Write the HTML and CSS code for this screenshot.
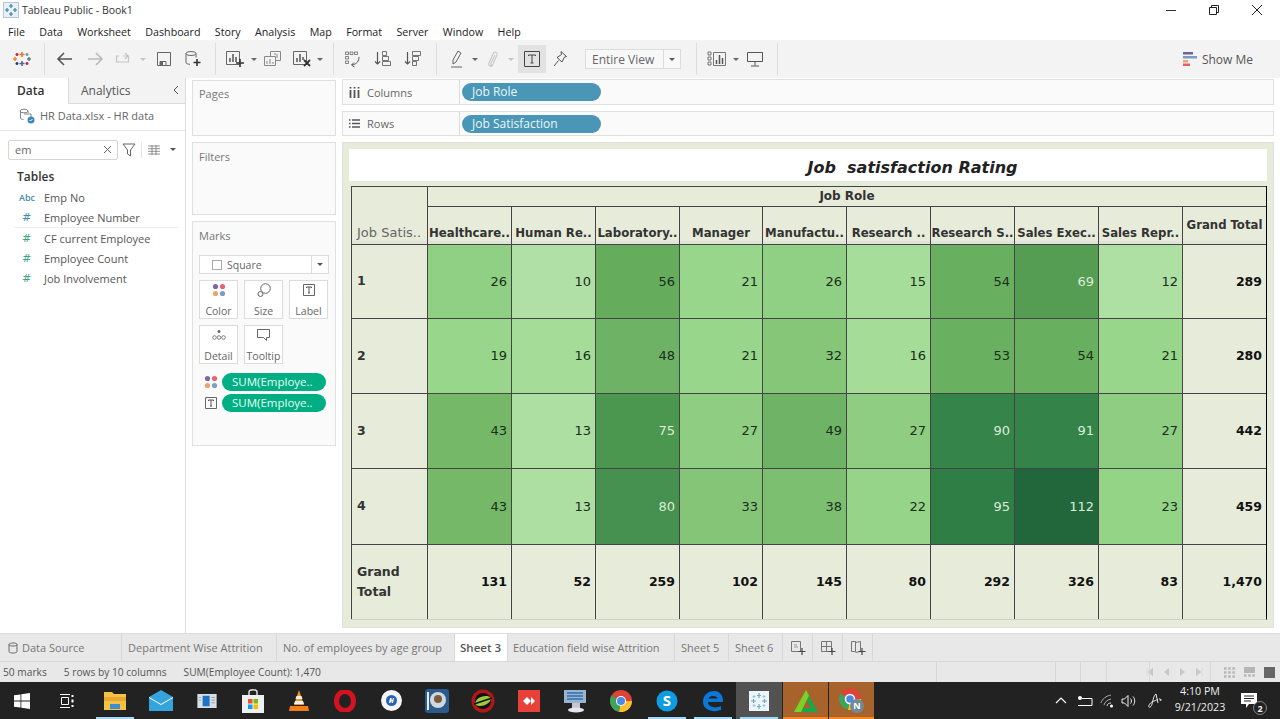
FILE: index.html
```html
<!DOCTYPE html>
<html lang="en">
<head>
  <meta charset="UTF-8">
  <title>Tableau Public - Book1</title>
  <link rel="stylesheet" href="styles.css">
</head>
<body>
  <div class="titlebar">
    <svg class="app-icon" width="16" height="16" viewBox="0 0 16 16"><rect x="0.5" y="0.5" width="15" height="15" fill="#e6f0f6" stroke="#b5c7d6"/><path d="M8 2v4M6 4h4M8 10v4M6 12h4M2 8h4M4 6v4M10 8h4M12 6v4" stroke="#3f7fa8" stroke-width="1.2"/></svg>
    <span class="app-title">Tableau Public - Book1</span>
    <div class="win-controls">
      <svg width="12" height="12" viewBox="0 0 12 12"><path d="M1 6.5h10" stroke="#333"/></svg>
      <svg width="12" height="12" viewBox="0 0 12 12"><path d="M1.5 3.5h7v7h-7zM3.5 3.5v-2h7v7h-2" fill="none" stroke="#222"/></svg>
      <svg width="12" height="12" viewBox="0 0 12 12"><path d="M1 1l10 10M11 1L1 11" stroke="#222"/></svg>
    </div>
  </div>

  <nav class="menubar">
    <span>File</span><span>Data</span><span>Worksheet</span><span>Dashboard</span><span>Story</span><span>Analysis</span><span>Map</span><span>Format</span><span>Server</span><span>Window</span><span>Help</span>
  </nav>

  <div class="toolbar">
    <svg class="logo" width="28" height="20" viewBox="0 0 28 20"><g stroke-width="1.6"><path d="M14 3v5M11.5 5.500h5" stroke="#e8762d"/><path d="M14 12v5M11.500 14.500h5" stroke="#5b6591"/><path d="M7 8v4M5 10h4" stroke="#eb912b"/><path d="M21 8v4M19 10h4" stroke="#59879b"/><path d="M9 4v3M7.500 5.500h3" stroke="#c72037"/><path d="M19 4v3M17.500 5.500h3" stroke="#7099a6"/><path d="M9 13v3M7.500 14.500h3" stroke="#1f447e"/><path d="M19 13v3M17.500 14.500h3" stroke="#b0304a"/></g></svg>
    <i class="sep sep-first"></i>
    <div class="tool w30"><svg width="18" height="16" viewBox="0 0 18 16"><path d="M16 8H2M8 2L2 8l6 6" fill="none" stroke="#555" stroke-width="1.6"/></svg></div>
    <div class="tool w30"><svg width="18" height="16" viewBox="0 0 18 16"><path d="M2 8h14M10 2l6 6-6 6" fill="none" stroke="#bbb" stroke-width="1.6"/></svg></div>
    <div class="tool w26"><svg width="18" height="14" viewBox="0 0 18 14"><path d="M5 4H2.500v6h12V4H9M11 1l3 3-3 3" fill="none" stroke="#c4c4c4" stroke-width="1.200"/></svg></div>
    <div class="tool w14"><i class="caret faint"></i></div>
    <div class="tool w28"><svg width="16" height="16" viewBox="0 0 16 16"><path d="M1.500 1.500h13v13h-13zM4 14.500v-4h6v4" fill="none" stroke="#666"/><rect x="4" y="11" width="3" height="3" fill="#666"/></svg></div>
    <div class="tool w30"><svg width="18" height="18" viewBox="0 0 18 18"><path d="M2 3.500v9c0 1 2 1.800 4 1.800M12 3.500v4" fill="none" stroke="#666"/><ellipse cx="7" cy="3.500" rx="5" ry="2" fill="none" stroke="#666"/><path d="M13 9v7M9.500 12.500h7" stroke="#333" stroke-width="1.600"/></svg></div>
    <i class="sep sep-a"></i>
    <div class="tool w30"><svg width="20" height="18" viewBox="0 0 20 18"><path d="M1.500 1.500h13v13h-13z" fill="none" stroke="#666"/><path d="M5 12V8M8 12V4M11 12V7" stroke="#555" stroke-width="1.500"/><path d="M15 9v8M11 13h8" stroke="#333" stroke-width="1.600"/></svg></div>
    <div class="tool w8"><i class="caret"></i></div>
    <div class="tool w30"><svg width="20" height="18" viewBox="0 0 20 18"><path d="M7.500 1.500h10v9h-10z" fill="#f3f3f3" stroke="#888"/><path d="M1.500 6.500h11v9h-11z" fill="#f3f3f3" stroke="#888"/><path d="M4 14v-3M7 14v-5M10 14v-2M12 5V3M14 8V4" stroke="#888"/></svg></div>
    <div class="tool w28"><svg width="20" height="18" viewBox="0 0 20 18"><path d="M1.500 1.500h13v13h-13z" fill="none" stroke="#666"/><path d="M5 12V8M8 12V4M11 10V7" stroke="#555" stroke-width="1.500"/><path d="M12 10l6 6M18 10l-6 6" stroke="#333" stroke-width="1.800"/></svg></div>
    <div class="tool w8"><i class="caret"></i></div>
    <i class="sep sep-b"></i>
    <div class="tool w30"><svg width="18" height="18" viewBox="0 0 18 18"><path d="M1.500 2h3v2.500h-3zM6 2h3v2.500H6zM10.500 2h3v2.500h-3zM1.500 6.500h3V9h-3zM1.500 11h3v2.500h-3z" fill="none" stroke="#666" stroke-width="0.800"/><path d="M15 7c0 4-2 7-7 8M10 12.500L7.500 15l3 2" fill="none" stroke="#555"/></svg></div>
    <div class="tool w30"><svg width="18" height="18" viewBox="0 0 18 18"><path d="M3.500 2v12M1 11.500L3.500 14 6 11.500" fill="none" stroke="#555" stroke-width="1.200"/><path d="M8.500 1.500h4v4h-4zM8.500 6.500h6v4h-6zM8.500 11.500h8v4h-8z" fill="none" stroke="#666" stroke-width="0.900"/></svg></div>
    <div class="tool w30"><svg width="18" height="18" viewBox="0 0 18 18"><path d="M3.500 2v12M1 11.500L3.500 14 6 11.500" fill="none" stroke="#555" stroke-width="1.200"/><path d="M8.500 1.500h8v4h-8zM8.500 6.500h6v4h-6zM8.500 11.500h4v4h-4z" fill="none" stroke="#666" stroke-width="0.900"/></svg></div>
    <i class="sep sep-c"></i>
    <div class="tool w28"><svg width="16" height="20" viewBox="0 0 16 20"><path d="M9 2l3 2-5 9-3 2 0-4zM2 18h11" fill="none" stroke="#666"/></svg></div>
    <div class="tool w7"><i class="caret"></i></div>
    <div class="tool w28"><svg width="14" height="18" viewBox="0 0 14 18"><path d="M10 5l-4 8c-1 2 1 3 2 1l4-9c1-3-3-4-4-1l-4 9c-1 3 2 4 4 2" fill="none" stroke="#c8c8c8" stroke-width="1.100"/></svg></div>
    <div class="tool w10"><i class="caret faint"></i></div>
    <div class="tool w28 tool-on"><svg width="18" height="18" viewBox="0 0 18 18"><path d="M1.500 1.500h15v15h-15z" fill="none" stroke="#444"/><path d="M5.500 6V5h7v1M9 5v8M7.500 13h3" fill="none" stroke="#444"/></svg></div>
    <div class="tool w28"><svg width="16" height="18" viewBox="0 0 16 18"><path d="M9 1.500l5.500 5-2 .5-2.500 5-5-4.500 4.500-3zM6.500 10.500L2 16" fill="none" stroke="#555"/></svg></div>
    <div class="fit-box"><span class="fit-text">Entire View</span><span class="fit-arrow"><i class="caret dark"></i></span></div>
    <i class="sep sep-d"></i>
    <div class="tool w30"><svg width="20" height="16" viewBox="0 0 20 16"><path d="M1 1h3v3H1zM1 6h3v3H1zM1 11h3v3H1z" fill="none" stroke="#555" stroke-width="0.800"/><path d="M6.500 1.500h12v13h-12z" fill="none" stroke="#777"/><path d="M9.500 13V9M12.500 13V4M15.500 13V7" stroke="#555" stroke-width="1.500"/></svg></div>
    <div class="tool w8"><i class="caret"></i></div>
    <div class="tool w30"><svg width="18" height="18" viewBox="0 0 18 18"><path d="M1.500 2.500h15v9h-15zM9 11.500v4M5 16h8" fill="none" stroke="#555"/></svg></div>
    <i class="sep sep-e"></i>
    <div class="show-me">
      <svg width="14" height="15" viewBox="0 0 14 15"><rect y="0" width="10" height="2.500" fill="#6c6590"/><rect y="4" width="14" height="2.500" fill="#7b9cc4"/><rect y="8" width="5" height="2.500" fill="#eda36c"/><rect y="11.500" width="7" height="2.500" fill="#e65c68"/></svg>
      <span>Show Me</span>
    </div>
  </div>

  <div class="main">
    <aside class="data-pane">
      <div class="pane-tabs">
        <div class="pane-tab active">Data</div>
        <div class="pane-tab">Analytics<svg class="collapse" width="8" height="10" viewBox="0 0 8 10"><path d="M6 1L2 5l4 4" fill="none" stroke="#555"/></svg></div>
      </div>
      <div class="source">
        <svg width="16" height="16" viewBox="0 0 16 16"><path d="M1.500 3v7c0 1 2 1.500 3 1.500M9 3v2" fill="none" stroke="#777" stroke-width="0.900"/><ellipse cx="5" cy="3" rx="4" ry="1.800" fill="none" stroke="#777" stroke-width="0.900"/><path d="M5 6h7v6" fill="none" stroke="#777" stroke-width="0.900"/><circle cx="12" cy="12" r="3.500" fill="#3d86bd"/><path d="M10.500 12l1 1 2-2" fill="none" stroke="#fff"/></svg>
        <span>HR Data.xlsx - HR data</span>
      </div>
      <div class="search-row">
        <div class="search-box"><span>em</span><svg width="9" height="9" viewBox="0 0 9 9"><path d="M1 1l7 7M8 1L1 8" stroke="#666"/></svg></div>
        <svg class="filter-icon" width="14" height="14" viewBox="0 0 14 14"><path d="M1 1h12L8.500 7v6l-3-2V7z" fill="none" stroke="#666"/></svg>
        <i class="search-sep"></i>
        <svg width="12" height="10" viewBox="0 0 12 10"><path d="M0 1h12M0 3.700h12M0 6.300h12M0 9h12M4 0v10M8 0v10" stroke="#777" stroke-width="0.800"/></svg>
        <i class="caret dark search-caret"></i>
      </div>
      <div class="tables-head">Tables</div>
      <ul class="fields">
        <li><b class="abc">Abc</b>Emp No</li>
        <li class="last-dim"><b class="hash blue">#</b>Employee Number</li>
        <li><b class="hash">#</b>CF current Employee</li>
        <li><b class="hash">#</b>Employee Count</li>
        <li><b class="hash">#</b>Job Involvement</li>
      </ul>
    </aside>

    <div class="cards">
      <section class="card card-pages"><h3>Pages</h3></section>
      <section class="card card-filters"><h3>Filters</h3></section>
      <section class="card card-marks">
        <h3>Marks</h3>
        <div class="mark-type">
          <svg width="10" height="10" viewBox="0 0 10 10"><rect x="0.500" y="0.500" width="9" height="9" fill="none" stroke="#aaa"/></svg>
          <span>Square</span>
          <i class="mark-arrow"><i class="caret dark"></i></i>
        </div>
        <div class="mark-grid">
          <div class="mark-btn"><svg width="14" height="14" viewBox="0 0 14 14"><circle cx="3.500" cy="3.500" r="2.600" fill="#7a6a9c"/><circle cx="10.500" cy="3.500" r="2.600" fill="#e8636f"/><circle cx="3.500" cy="10.500" r="2.600" fill="#eda36c"/><circle cx="10.500" cy="10.500" r="2.600" fill="#7b9cc4"/></svg>Color</div>
          <div class="mark-btn"><svg width="14" height="14" viewBox="0 0 14 14"><circle cx="8.500" cy="5.500" r="4.800" fill="none" stroke="#666"/><circle cx="3.500" cy="11" r="2.500" fill="#f9f9f9" stroke="#666"/></svg>Size</div>
          <div class="mark-btn"><svg width="14" height="14" viewBox="0 0 14 14"><path d="M1.500 1.500h11v11h-11z" fill="none" stroke="#666"/><path d="M4.500 5V4h5v1M7 4v6M6 10h2" fill="none" stroke="#555"/></svg>Label</div>
          <div class="mark-btn"><svg width="14" height="14" viewBox="0 0 14 14"><circle cx="7" cy="3.500" r="1.500" fill="#666"/><circle cx="2.500" cy="9.500" r="1.800" fill="none" stroke="#666" stroke-width="0.800"/><circle cx="7" cy="9.500" r="1.800" fill="none" stroke="#666" stroke-width="0.800"/><circle cx="11.500" cy="9.500" r="1.800" fill="none" stroke="#666" stroke-width="0.800"/></svg>Detail</div>
          <div class="mark-btn"><svg width="15" height="14" viewBox="0 0 15 14"><path d="M1.500 1.500h12v8h-3v3l-3-3h-6z" fill="none" stroke="#666"/></svg>Tooltip</div>
        </div>
        <div class="mark-pills">
          <div class="mark-pill-row"><svg width="14" height="14" viewBox="0 0 14 14"><circle cx="3.500" cy="3.500" r="2.600" fill="#7a6a9c"/><circle cx="10.500" cy="3.500" r="2.600" fill="#e8636f"/><circle cx="3.500" cy="10.500" r="2.600" fill="#eda36c"/><circle cx="10.500" cy="10.500" r="2.600" fill="#7b9cc4"/></svg><span class="green-pill">SUM(Employe..</span></div>
          <div class="mark-pill-row"><svg width="14" height="14" viewBox="0 0 14 14"><path d="M1.500 1.500h11v11h-11z" fill="none" stroke="#666"/><path d="M4.500 5V4h5v1M7 4v6M6 10h2" fill="none" stroke="#555"/></svg><span class="green-pill">SUM(Employe..</span></div>
        </div>
      </section>
    </div>

    <div class="work">
      <div class="shelf shelf-cols">
        <div class="shelf-label"><svg width="11" height="11" viewBox="0 0 11 11"><path d="M1.500 3v8M5.500 3v8M9.500 3v8M1.500 0v1.500M5.500 0v1.500M9.500 0v1.500" stroke="#555" stroke-width="1.800"/></svg>Columns</div>
        <div class="blue-pill">Job Role</div>
      </div>
      <div class="shelf">
        <div class="shelf-label"><svg width="11" height="11" viewBox="0 0 11 11"><path d="M3 2h8M3 5.500h8M3 9h8M0 2h1.500M0 5.500h1.500M0 9h1.500" stroke="#555" stroke-width="1.300"/></svg>Rows</div>
        <div class="blue-pill">Job Satisfaction</div>
      </div>

      <div class="viz">
        <div class="viz-title">Job&nbsp; satisfaction Rating</div>
        <div class="crosstab">
          <div class="corner"><span>Job Satis..</span></div>
          <div class="top-head">Job Role</div>
          <div class="col-head">Healthcare..</div>
          <div class="col-head">Human Re..</div>
          <div class="col-head">Laboratory..</div>
          <div class="col-head">Manager</div>
          <div class="col-head">Manufactu..</div>
          <div class="col-head">Research ..</div>
          <div class="col-head">Research S..</div>
          <div class="col-head">Sales Exec..</div>
          <div class="col-head">Sales Repr..</div>
          <div class="col-head grand-head">Grand Total</div>

          <div class="row-head">1</div>
          <div class="num" style="background:#90d084">26</div>
          <div class="num" style="background:#b1e0a6">10</div>
          <div class="num" style="background:#65ac5d">56</div>
          <div class="num" style="background:#98d68b">21</div>
          <div class="num" style="background:#90d084">26</div>
          <div class="num" style="background:#a6dd9a">15</div>
          <div class="num" style="background:#68af5f">54</div>
          <div class="num light" style="background:#559d52">69</div>
          <div class="num" style="background:#aedfa3">12</div>
          <div class="total">289</div>

          <div class="row-head">2</div>
          <div class="num" style="background:#98d68b">19</div>
          <div class="num" style="background:#a4dc98">16</div>
          <div class="num" style="background:#6eb365">48</div>
          <div class="num" style="background:#98d68b">21</div>
          <div class="num" style="background:#86c679">32</div>
          <div class="num" style="background:#a4dc98">16</div>
          <div class="num" style="background:#69b060">53</div>
          <div class="num" style="background:#68af5f">54</div>
          <div class="num" style="background:#98d68b">21</div>
          <div class="total">280</div>

          <div class="row-head">3</div>
          <div class="num" style="background:#74b868">43</div>
          <div class="num" style="background:#acdfa1">13</div>
          <div class="num light" style="background:#4c9750">75</div>
          <div class="num" style="background:#8fce82">27</div>
          <div class="num" style="background:#6fb466">49</div>
          <div class="num" style="background:#8fce82">27</div>
          <div class="num light" style="background:#35854a">90</div>
          <div class="num light" style="background:#34844a">91</div>
          <div class="num" style="background:#8fce82">27</div>
          <div class="total">442</div>

          <div class="row-head">4</div>
          <div class="num" style="background:#74b868">43</div>
          <div class="num" style="background:#acdfa1">13</div>
          <div class="num light" style="background:#46914f">80</div>
          <div class="num" style="background:#85c578">33</div>
          <div class="num" style="background:#7dbf71">38</div>
          <div class="num" style="background:#96d589">22</div>
          <div class="num light" style="background:#2f7e45">95</div>
          <div class="num light" style="background:#22663c">112</div>
          <div class="num" style="background:#94d487">23</div>
          <div class="total">459</div>

          <div class="row-head grand-row">Grand<br>Total</div>
          <div class="total">131</div>
          <div class="total">52</div>
          <div class="total">259</div>
          <div class="total">102</div>
          <div class="total">145</div>
          <div class="total">80</div>
          <div class="total">292</div>
          <div class="total">326</div>
          <div class="total">83</div>
          <div class="total">1,470</div>
        </div>
      </div>
    </div>
  </div>

  <div class="sheet-tabs">
    <div class="tab tab-source"><svg width="10" height="12" viewBox="0 0 10 12"><path d="M1 2.500v7c0 2 8 2 8 0v-7M1 2.500c0-2 8-2 8 0s-8 2-8 0" fill="none" stroke="#666"/></svg>Data Source</div>
    <div class="tab tab-dept">Department Wise Attrition</div>
    <div class="tab tab-age">No. of employees by age group</div>
    <div class="tab tab-current">Sheet 3</div>
    <div class="tab tab-edu">Education field wise Attrition</div>
    <div class="tab tab-s5">Sheet 5</div>
    <div class="tab tab-s6">Sheet 6</div>
    <div class="tab tab-add"><svg width="16" height="16" viewBox="0 0 16 16"><path d="M1.500 1.500h9v10h-9z" fill="none" stroke="#777"/><path d="M4 7h4M4 5h3" stroke="#999"/><path d="M12 8v7M8.500 11.500h7" stroke="#444" stroke-width="1.200"/></svg></div>
    <div class="tab tab-add"><svg width="16" height="16" viewBox="0 0 16 16"><path d="M1.500 1.500h10v10h-10zM1.500 6.500h10M6.500 1.500v10" fill="none" stroke="#777"/><path d="M12 8v7M8.500 11.500h7" stroke="#444" stroke-width="1.200"/></svg></div>
    <div class="tab tab-add"><svg width="16" height="16" viewBox="0 0 16 16"><path d="M1.500 1.500h4v10h-4zM5.500 2.500l5-1v10l-5 1" fill="none" stroke="#777"/><path d="M12 8v7M8.500 11.500h7" stroke="#444" stroke-width="1.200"/></svg></div>
  </div>

  <div class="statusbar">
    <span class="stat-marks">50 marks</span>
    <span class="stat-rows">5 rows by 10 columns</span>
    <span>SUM(Employee Count): 1,470</span>
    <div class="stat-right">
      <i class="seg seg-a"></i><i class="seg seg-b"></i><i class="seg seg-c"></i><i class="seg seg-d"></i><i class="seg seg-e"></i>
      <div class="pager">
        <svg width="7" height="8" viewBox="0 0 7 8"><path d="M1 0v8M7 0v8L2 4z" fill="#c8c8c8" stroke="#c8c8c8" stroke-width="0.500"/></svg>
        <svg width="5" height="8" viewBox="0 0 5 8"><path d="M5 0v8L0 4z" fill="#c8c8c8"/></svg>
        <svg width="5" height="8" viewBox="0 0 5 8"><path d="M0 0v8l5-4z" fill="#c8c8c8"/></svg>
        <svg width="7" height="8" viewBox="0 0 7 8"><path d="M6 0v8M0 0v8l5-4z" fill="#c8c8c8" stroke="#c8c8c8" stroke-width="0.500"/></svg>
      </div>
      <div class="view-btns">
        <svg width="11" height="11" viewBox="0 0 11 11"><path d="M0 1.500h11M0 5.500h11M0 9.500h11" stroke="#b5b5b5" stroke-width="2.500" stroke-dasharray="2.500 1.700"/></svg>
        <svg width="11" height="11" viewBox="0 0 11 11"><path d="M0 0h11v6H0z" fill="#b5b5b5"/><path d="M0 8.500h11" stroke="#b5b5b5" stroke-width="2.500" stroke-dasharray="2.500 1.700"/></svg>
        <svg width="11" height="11" viewBox="0 0 11 11"><rect width="11" height="11" fill="#666"/></svg>
      </div>
    </div>
  </div>

  <footer class="taskbar">
    <div class="start"><svg width="16" height="16" viewBox="0 0 16 16"><path d="M0 2.300l6.500-.9v6.200H0zM7.300 1.300L16 0v7.600H7.300zM0 8.400h6.500v6.200L0 13.700zM7.300 8.400H16V16l-8.700-1.300z" fill="#fff"/></svg></div>
    <div class="task-view"><svg width="16" height="14" viewBox="0 0 16 14"><path d="M1 .5h10M1 13.500h10M2.500 3.500h7v7h-7z" fill="none" stroke="#fff"/><path d="M13.500 1v2M13.500 5.500v3M13.500 11v2" stroke="#fff" stroke-width="2"/></svg></div>
    <div class="ti running"><svg width="22" height="20" viewBox="0 0 22 20"><path d="M0 1h8l2 2h12v16H0z" fill="#f3c246"/><path d="M0 6h22v4H0z" fill="#e8a92e"/><path d="M6 13h10v5H6z" fill="#3f8fd0"/></svg></div>
    <div class="ti"><svg width="24" height="21" viewBox="0 0 24 21"><path d="M0 7L12 0l12 7v14H0z" fill="#35a4dc"/><path d="M0 7l12 7 12-7v1L12 15 0 8z" fill="#fff"/></svg></div>
    <div class="ti"><svg width="20" height="14" viewBox="0 0 22 16"><rect width="22" height="16" fill="#d9dee3"/><rect x="6" y="2" width="8" height="12" fill="#1a73c8"/><path d="M16 4h4M16 7h4M16 10h4M2 4h2M2 7h2" stroke="#8a97a3"/></svg></div>
    <div class="ti"><svg width="22" height="24" viewBox="0 0 22 24"><path d="M7 7V3c0-3 8-3 8 0v4" fill="none" stroke="#ddd" stroke-width="1.500"/><rect y="6" width="22" height="18" fill="#eef0f2"/><rect x="6" y="10" width="4.500" height="4.500" fill="#f25022"/><rect x="11.500" y="10" width="4.500" height="4.500" fill="#7fba00"/><rect x="6" y="15.500" width="4.500" height="4.500" fill="#00a4ef"/><rect x="11.500" y="15.500" width="4.500" height="4.500" fill="#ffb900"/></svg></div>
    <div class="ti"><svg width="20" height="22" viewBox="0 0 20 22"><path d="M10 0l5 15H5z" fill="#f7931e"/><path d="M7.500 6h5l1 3h-7z" fill="#f2f2f2"/><path d="M6 11h8l1 3H5z" fill="#f2f2f2"/><path d="M1 16h18l1 5H0z" fill="#ef7f1a"/></svg></div>
    <div class="ti"><svg width="22" height="22" viewBox="0 0 22 22"><ellipse cx="11" cy="11" rx="8.500" ry="9.500" fill="none" stroke="#d5121f" stroke-width="5"/></svg></div>
    <div class="ti"><svg width="21" height="21" viewBox="0 0 21 21"><circle cx="10.500" cy="10.500" r="10.500" fill="#f5f5f5"/><circle cx="10.500" cy="10.500" r="5.500" fill="#2a62b5"/><path d="M8 13l1-5h1.500l.5 3 1-3h1l-1 5h-1.200l-.5-2.500-.8 2.500z" fill="#fff"/></svg></div>
    <div class="ti"><svg width="24" height="24" viewBox="0 0 24 24"><rect width="24" height="24" rx="3" fill="#2b5a8c"/><circle cx="13" cy="11" r="8" fill="#cfd8de"/><circle cx="13" cy="10" r="4" fill="#7a5a3c"/><path d="M3 3v18" stroke="#e8eef2" stroke-width="2"/></svg></div>
    <div class="ti"><svg width="24" height="24" viewBox="0 0 24 24"><circle cx="12" cy="12" r="11.500" fill="#b01818"/><circle cx="12" cy="12" r="8" fill="#111"/><ellipse cx="12" cy="12" rx="8" ry="4.500" fill="#9ccb3b" transform="rotate(-20 12 12)"/><path d="M3 15l18-6" stroke="#111" stroke-width="1.500"/></svg></div>
    <div class="ti"><svg width="22" height="22" viewBox="0 0 22 22"><rect width="22" height="22" fill="#e8413a"/><path d="M5 11l4-4 4 4-4 4zM13 7l4 4-4 4" fill="#fff"/></svg></div>
    <div class="ti"><svg width="22" height="24" viewBox="0 0 22 24"><rect x="0" y="1" width="22" height="13" fill="#9ab4cf"/><path d="M3 4h16M3 7h16M3 10h16" stroke="#2e6fb0" stroke-width="1.500"/><rect x="8" y="14" width="8" height="5" fill="#c2c8cf"/><ellipse cx="12" cy="21" rx="8" ry="2.500" fill="#e4e7ea"/></svg></div>
    <div class="ti"><svg width="22" height="22" viewBox="0 0 22 22"><circle cx="11" cy="11" r="11" fill="#db4437"/><path d="M11 11H22A11 11 0 0 1 9 21.800z" fill="#fbc02d"/><path d="M11 11L9 21.800A11 11 0 0 1 1.500 5.500z" fill="#3ba55c"/><circle cx="11" cy="11" r="5" fill="#fff"/><circle cx="11" cy="11" r="4" fill="#4a89e8"/></svg></div>
    <div class="ti running"><svg width="22" height="22" viewBox="0 0 22 22"><circle cx="11" cy="11" r="10.500" fill="#0f9be0"/><text x="11" y="16" text-anchor="middle" class="skype-s">S</text></svg></div>
    <div class="ti running"><svg width="22" height="22" viewBox="0 0 22 22"><path d="M21 12H6c0 5 7 7 13 4v4c-8 3-18 0-18-8C1 5 6 1 12 1c6 0 9 4 9 11zM15.500 8.500C15.500 5 7 5 6.500 8.500z" fill="#0a78d7"/></svg></div>
    <div class="ti running current"><svg width="20" height="20" viewBox="0 0 20 20"><rect width="20" height="20" fill="#eef5f9"/><path d="M10 2v5M8 4.500h4M10 13v5M8 15.500h4M2 10h5M4.500 8v4M13 10h5M15.500 8v4" stroke="#6ea7c7" stroke-width="1.200"/><path d="M5 4v3M3.500 5.500h3M15 4v3M13.500 5.500h3M5 13v3M3.500 14.500h3M15 13v3M13.500 14.500h3" stroke="#9cc3d9"/></svg></div>
    <div class="ti running alert"><svg width="24" height="22" viewBox="0 0 24 22"><path d="M12 0l12 22H0z" fill="#1aa64a"/><path d="M12 9l5 9H7z" fill="#a8622c"/><path d="M12 0l3 5.500L7 22H0z" fill="#7fd024"/></svg></div>
    <div class="ti running alert"><svg width="26" height="26" viewBox="0 0 26 26"><circle cx="11" cy="11" r="11" fill="#db4437"/><path d="M11 11H22A11 11 0 0 1 9 21.800z" fill="#fbc02d"/><path d="M11 11L9 21.800A11 11 0 0 1 1.500 5.500z" fill="#3ba55c"/><circle cx="11" cy="11" r="4.500" fill="#4a89e8" stroke="#fff" stroke-width="1.500"/><circle cx="18" cy="18" r="7" fill="#6f8a96"/><text x="18" y="21" text-anchor="middle" class="profile-n">N</text></svg></div>

    <div class="tray">
      <svg class="tray-chevron" width="12" height="7" viewBox="0 0 12 7"><path d="M1 6l5-5 5 5" fill="none" stroke="#fff" stroke-width="1.200"/></svg>
      <svg class="tray-battery" width="16" height="12" viewBox="0 0 16 12"><path d="M5 3.500h10v7H1" fill="none" stroke="#fff"/><circle cx="3" cy="3" r="2" fill="#fff"/></svg>
      <svg class="tray-wifi" width="14" height="14" viewBox="0 0 14 14"><path d="M1 9c1-4 5-7 10-8M4 11c1-3 3-5 7-6" fill="none" stroke="#aaa"/><path d="M7 12c0-2 2-3 4-3" fill="none" stroke="#ddd"/><circle cx="11.500" cy="12" r="1.500" fill="#fff"/></svg>
      <svg class="tray-sound" width="16" height="14" viewBox="0 0 16 14"><path d="M1 5h2.500L7 1.500v11L3.500 9H1zM9.500 4.500c1.300 1.500 1.300 3.500 0 5M12 2.500c2.300 2.500 2.300 6.500 0 9" fill="none" stroke="#eee"/></svg>
      <svg class="tray-pen" width="16" height="16" viewBox="0 0 16 16"><path d="M9 1c-2 1-3 6-4 10-.5 2-2 4-3 3s1-4 3-5 5-2 6-3M9 1c1 3 1 6 2 9" fill="none" stroke="#eee"/><path d="M12 5l3 2-2 1z" fill="#eee"/></svg>
      <div class="clock"><span>4:10 PM</span><span>9/21/2023</span></div>
      <div class="notif">
        <svg width="18" height="16" viewBox="0 0 18 16"><path d="M0 0h16v11H8l-3 4v-4H0z" fill="#fff"/><path d="M3 3h10M3 5.500h10M3 8h7" stroke="#222"/></svg>
        <span class="notif-count">2</span>
      </div>
    </div>
  </footer>
</body>
</html>
```

FILE: styles.css
```css
* {
  box-sizing: border-box;
}
html, body {
  margin: 0;
  height: 719px;
  overflow: hidden;
}
body {
  display: flex;
  flex-direction: column;
  font-family: "Open Sans", "Noto Sans", sans-serif;
  font-size: 12px;
  color: #444;
  background: #fff;
}
svg {
  flex: none;
  display: block;
}
i {
  font-style: normal;
}
h3 {
  margin: 0;
  font-size: 12px;
  font-weight: 400;
  color: #777;
}

/* window chrome */
.titlebar {
  height: 20px;
  display: flex;
  align-items: center;
  padding-left: 3px;
}
.app-title {
  margin-left: 3px;
  font-size: 10.5px;
  color: #333;
}
.win-controls {
  margin-left: auto;
  display: flex;
  gap: 31px;
  padding-right: 17px;
}
.menubar {
  height: 20px;
  display: flex;
  align-items: center;
  gap: 14.4px;
  padding: 3px 0 0 8px;
  font-size: 10.7px;
  color: #222;
}

/* toolbar */
.toolbar {
  height: 38px;
  display: flex;
  align-items: center;
  background: #f3f3f3;
  padding-left: 8px;
}
.tool {
  height: 28px;
  display: flex;
  align-items: center;
  justify-content: center;
}
.w30 { width: 30px; }
.w28 { width: 28px; }
.w26 { width: 26px; }
.w14 { width: 14px; }
.w10 { width: 10px; }
.w8 { width: 8px; }
.w7 { width: 7px; }
.tool-on {
  background: #e2e2e2;
  margin-left: 2px;
}
.caret {
  display: block;
  width: 0;
  height: 0;
  border: 3px solid transparent;
  border-top: 3px solid #666;
  border-bottom: 0;
}
.caret.faint { border-top-color: #c4c4c4; }
.caret.dark { border-top-color: #555; }
.sep {
  width: 1px;
  height: 32px;
  background: #dedede;
}
.sep-first { margin: 0 5px 0 8px; }
.sep-a { margin: 0 4px 0 7px; }
.sep-b { margin: 0 4px 0 9px; }
.sep-c { margin: 0 6px 0 8px; }
.sep-d { margin: 0 5px 0 15px; }
.sep-e { margin-left: 7px; }
.fit-box {
  width: 96px;
  height: 20px;
  margin-left: 11px;
  display: flex;
  align-items: center;
  background: #f8f8f8;
  border: 1px solid #dcdcdc;
  color: #666;
}
.fit-text {
  flex: 1;
  padding-left: 6px;
}
.fit-arrow {
  width: 17px;
  height: 100%;
  display: flex;
  align-items: center;
  justify-content: center;
  border-left: 1px solid #dcdcdc;
}
.show-me {
  margin-left: auto;
  padding-right: 27px;
  display: flex;
  align-items: center;
  gap: 5px;
  color: #555;
}

/* main area */
.main {
  height: 555px;
  display: flex;
}
.data-pane {
  width: 186px;
  flex: none;
  border-right: 1px solid #dcdcdc;
}
.pane-tabs {
  height: 26px;
  display: flex;
}
.pane-tab {
  flex: 1;
  position: relative;
  padding: 4px 0 0 12px;
  background: #f3f3f3;
  border-bottom: 1px solid #dcdcdc;
  color: #555;
}
.pane-tab.active {
  flex: none;
  width: 69px;
  padding-left: 17px;
  background: #fff;
  border-bottom: 0;
  border-right: 1px solid #dcdcdc;
  font-weight: 600;
  color: #333;
}
.collapse {
  position: absolute;
  right: 5px;
  top: 7px;
}
.source {
  height: 27px;
  display: flex;
  align-items: center;
  gap: 5px;
  padding: 0 0 3px 19px;
  border-bottom: 1px solid #e4e4e4;
  font-size: 11px;
  color: #666;
}
.search-row {
  height: 37px;
  display: flex;
  align-items: center;
  padding: 0 0 0 8px;
}
.search-box {
  width: 110px;
  height: 20px;
  display: flex;
  align-items: center;
  justify-content: space-between;
  padding: 0 5px 0 6px;
  border: 1px solid #d4d4d4;
  border-radius: 2px;
  font-size: 11px;
  color: #666;
}
.filter-icon {
  margin-left: 4px;
}
.search-sep {
  width: 1px;
  height: 16px;
  margin: 0 6px 0 5px;
  background: #e4e4e4;
}
.search-caret {
  margin-left: 10px;
}
.tables-head {
  padding-left: 17px;
  font-size: 12px;
  font-weight: 600;
  color: #333;
  line-height: 16px;
  margin-top: 1px;
}
.fields {
  list-style: none;
  margin: 2px 0 0;
  padding: 0;
  font-size: 11px;
  color: #555;
}
.fields li {
  height: 20px;
  display: flex;
  align-items: center;
}
.fields li.last-dim {
  height: 21px;
  border-bottom: 1px solid #eee;
  margin: 0 6px 0 14px;
}
.fields li.last-dim b {
  margin-left: -14px;
}
.abc, .hash {
  flex: none;
  width: 44px;
  padding-left: 19px;
  font-weight: 400;
}
.abc {
  padding-left: 19px;
  font-size: 9px;
  font-weight: 600;
  color: #4a8ab0;
}
.hash {
  padding-left: 22px;
  font-family: "DejaVu Sans", sans-serif;
  font-size: 11px;
  color: #3fa58c;
}
.hash.blue {
  color: #3f8ca5;
}

/* pages, filters, marks */
.cards {
  width: 144px;
  margin: 2px 0 0 6px;
  flex: none;
  display: flex;
  flex-direction: column;
  gap: 6px;
}
.card {
  background: #fafafa;
  border: 1px solid #e0e0e0;
  padding: 6px;
}
.card-pages {
  height: 56px;
  padding-top: 5px;
}
.card-filters { height: 73px; }
.card-marks { height: 225px; }
.card h3 { font-size: 11px; }
.mark-type {
  height: 19px;
  margin-top: 12px;
  display: flex;
  align-items: center;
  gap: 5px;
  padding-left: 12px;
  background: #fff;
  border: 1px solid #dcdcdc;
  font-size: 10.5px;
  color: #666;
}
.mark-arrow {
  margin-left: auto;
  width: 17px;
  height: 100%;
  display: flex;
  align-items: center;
  justify-content: center;
  border-left: 1px solid #dcdcdc;
}
.mark-grid {
  margin-top: 6px;
  display: grid;
  grid-template-columns: repeat(3, 39px);
  grid-auto-rows: 39px;
  column-gap: 6px;
  row-gap: 6px;
}
.mark-btn {
  display: flex;
  flex-direction: column;
  align-items: center;
  justify-content: space-between;
  padding: 2px 0 0;
  border: 1px solid #dcdcdc;
  background: #fff;
  font-size: 10.5px;
  color: #666;
}
.mark-pills {
  margin-top: 9px;
  display: flex;
  flex-direction: column;
  gap: 3px;
}
.mark-pill-row {
  display: flex;
  align-items: center;
  gap: 4px;
  padding-left: 5px;
}
.green-pill {
  width: 104px;
  height: 18px;
  line-height: 18px;
  border-radius: 9px;
  padding-left: 10px;
  background: #00ae83;
  color: #eafff6;
  font-size: 11.5px;
}

/* shelves */
.work {
  flex: 1;
  margin: 1px 6px 0;
  display: flex;
  flex-direction: column;
  min-width: 0;
}
.shelf {
  height: 25px;
  margin-bottom: 6px;
  display: flex;
  align-items: center;
  background: #fafafa;
  border: 1px solid #e0e0e0;
}
.shelf-cols {
  height: 26px;
}
.shelf-label {
  width: 117px;
  height: 100%;
  display: flex;
  align-items: center;
  gap: 7px;
  padding-left: 6px;
  border-right: 1px solid #dcdcdc;
  font-size: 11px;
  color: #666;
}
.blue-pill {
  width: 139px;
  height: 18px;
  margin-left: 2px;
  line-height: 18px;
  padding-left: 10px;
  border-radius: 9px;
  background: #4a96b6;
  color: #eaf6fa;
  font-size: 12px;
}

/* the view */
.viz {
  height: 486px;
  padding: 6px 6px 0;
  background: #e7ebda;
  border: 1px solid #e0e0e0;
}
.viz-title {
  height: 32px;
  display: flex;
  align-items: center;
  justify-content: center;
  padding: 4px 0 0 209px;
  background: #fff;
  font-family: "DejaVu Sans", sans-serif;
  font-size: 16px;
  font-weight: 700;
  font-style: italic;
  color: #222;
}
.crosstab {
  margin: 5px 0 0 2px;
  width: 916px;
  display: grid;
  grid-template-columns: 76px 84px 84px 84px 83px 84px 84px 84px 84px 84px 84px;
  grid-template-rows: 20px 38px 74px 75px 75px 76px 75px;
  font-family: "DejaVu Sans", sans-serif;
  border-right: 1px solid #000;
  border-bottom: 1px solid #cfd1c6;
  color: #333;
}
.crosstab > div {
  border-left: 1px solid #444;
  border-top: 1px solid #444;
  min-width: 0;
  white-space: nowrap;
}
.corner {
  grid-row: 1 / span 2;
  display: flex;
  align-items: flex-end;
  padding: 0 0 4px 5px;
  font-size: 13px;
  font-weight: 400;
  color: #666;
}
.top-head {
  grid-column: 2 / -1;
  text-align: center;
  font-size: 12px;
  font-weight: 700;
  line-height: 18px;
}
.col-head {
  display: flex;
  align-items: flex-end;
  justify-content: center;
  padding-bottom: 4px;
  font-family: "DejaVu Sans Condensed", "DejaVu Sans", sans-serif;
  font-size: 13px;
  font-weight: 700;
}
.grand-head {
  padding-bottom: 12px;
}
.col-head, .corner {
  background: linear-gradient(to top, #e1e3da 3px, transparent 3px);
}
.row-head {
  display: flex;
  align-items: center;
  padding: 0 0 2px 5px;
  font-size: 12.5px;
  font-weight: 700;
}
.grand-row {
  padding-bottom: 0;
  line-height: 20px;
}
.num, .total {
  display: flex;
  align-items: center;
  justify-content: flex-end;
  padding: 0 4px 1px 0;
  font-size: 13px;
  color: #1a2e1a;
}
.num.light {
  color: #dcecd6;
}
.total {
  font-size: 12.5px;
  font-weight: 700;
  color: #111;
}

/* sheet tabs */
.sheet-tabs {
  height: 29px;
  display: flex;
  background: #e8e8e8;
  border-top: 1px solid #dcdcdc;
  border-bottom: 1px solid #d8d8d8;
  color: #777;
  font-size: 11px;
}
.tab {
  display: flex;
  align-items: center;
  gap: 4px;
  flex: none;
  padding-left: 6px;
  border-right: 1px solid #d8d8d8;
  white-space: nowrap;
}
.tab-source {
  width: 122px;
  padding-left: 8px;
}
.tab-dept { width: 155px; }
.tab-age { width: 178px; }
.tab-current {
  width: 53px;
  padding-left: 5px;
  background: #fff;
  font-size: 11.5px;
  font-weight: 600;
  color: #555;
}
.tab-edu {
  width: 167px;
  padding-left: 5px;
}
.tab-s5 { width: 54px; }
.tab-s6 { width: 54px; }
.tab-add {
  width: 30px;
  padding-left: 0;
  justify-content: center;
}

/* status bar */
.statusbar {
  height: 20px;
  display: flex;
  align-items: center;
  padding-left: 3px;
  background: #e8e8e8;
  font-size: 10.2px;
  color: #555;
}
.stat-marks { margin-right: 17px; }
.stat-rows { margin-right: 17px; }
.stat-right {
  position: relative;
  flex: 1;
  height: 100%;
  display: flex;
  align-items: center;
  justify-content: flex-end;
}
.seg {
  position: absolute;
  top: 0;
  bottom: 0;
  width: 1px;
  background: #d8d8d8;
}
.seg-a { right: 343px; }
.seg-b { right: 224px; }
.seg-c { right: 199px; }
.seg-d { right: 173px; }
.seg-e { right: 130px; }
.pager {
  display: flex;
  align-items: center;
  gap: 11px;
  width: 72px;
  padding-left: 7px;
  height: 100%;
  border-right: 1px solid #d8d8d8;
}
.view-btns {
  display: flex;
  gap: 9px;
  padding: 0 5px 0 13px;
}

/* windows taskbar */
.taskbar {
  height: 37px;
  display: flex;
  align-items: center;
  background: #222;
  color: #eee;
}
.start {
  width: 44px;
  display: flex;
  justify-content: center;
}
.task-view {
  width: 46px;
  display: flex;
  justify-content: center;
}
.ti {
  position: relative;
  width: 46px;
  height: 100%;
  display: flex;
  align-items: center;
  justify-content: center;
}
.task-view + .ti { margin-left: 2px; }
.ti.running::after {
  content: "";
  position: absolute;
  left: 4px;
  right: 4px;
  bottom: 0;
  height: 2px;
  background: #a5d8f3;
}
.ti.current {
  background: #525252;
}
.ti.alert {
  background: #a8622c;
  border-left: 1px solid #222;
}
.ti.alert::after {
  left: 0;
  right: 0;
  background: #f58a1f;
}
.skype-s {
  font-family: "Open Sans", sans-serif;
  font-size: 15px;
  font-weight: 700;
  fill: #fff;
}
.profile-n {
  font-family: "Open Sans", sans-serif;
  font-size: 9px;
  font-weight: 700;
  fill: #fff;
}
.tray {
  margin-left: auto;
  height: 100%;
  display: flex;
  align-items: center;
  padding-right: 19px;
}
.tray-chevron { margin-right: 10px; }
.tray-battery { margin-right: 7px; }
.tray-wifi { margin-right: 7px; }
.tray-sound { margin-right: 10px; }
.tray-pen { margin-right: 9px; }
.clock {
  width: 56px;
  display: flex;
  flex-direction: column;
  align-items: center;
  gap: 1px;
  font-size: 10.7px;
  line-height: 15px;
  margin-top: -2px;
}
.notif {
  position: relative;
  margin-left: 13px;
  width: 20px;
}
.notif-count {
  position: absolute;
  right: -6px;
  bottom: -6px;
  width: 14px;
  height: 14px;
  line-height: 13px;
  text-align: center;
  border: 1px solid #888;
  border-radius: 50%;
  background: #222;
  font-size: 9px;
  font-weight: 700;
}
```
